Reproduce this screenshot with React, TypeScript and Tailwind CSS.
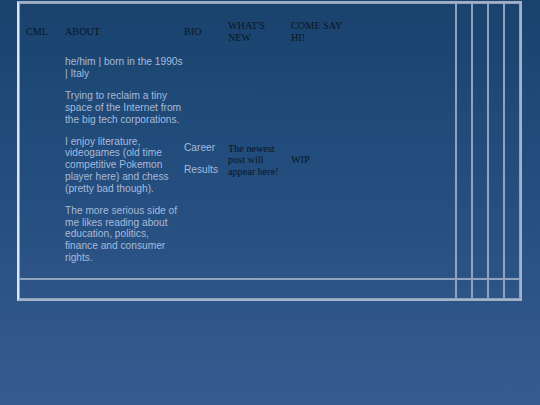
export default function App() {
  const serif = "font-['Liberation_Serif','Times_New_Roman',serif] text-[10.2px] leading-[11.5px] text-[#0a1524]"
  const sans = "font-['Liberation_Sans',Arial,sans-serif] text-[10.2px] leading-[11.8px] text-[#a7badb]"
  const cell = 'border border-[#8fa3bf]'

  return (
    <div className="min-h-[405px] w-full bg-linear-to-b from-[#19436d] via-[#254f80] to-[#375b90] pt-px pl-[17px]">
      <div className="grid h-[300px] w-[505px] grid-cols-[1fr_16px_16px_16px_16px] grid-rows-[276px_20px] border-2 border-t-[#9fb0c6] border-l-[#dce4ef] border-r-[#a3b2c6] border-b-[#a3b2c6]">
        <div className={cell}>
          <div className="grid grid-cols-[39px_119px_44px_63px_60px] items-center gap-y-[3px] pl-[6px] pt-[16px]">
            {/* header row */}
            <div className={serif}>CML</div>
            <div className={serif}>ABOUT</div>
            <div className={serif}>BIO</div>
            <div className={`${serif} w-[58px]`}>WHAT'S NEW</div>
            <div className={`${serif} w-[60px]`}>COME SAY HI!</div>

            {/* content row */}
            <div />
            <div className={`${sans} w-[118.5px]`}>
              <p className="my-[10.2px]">he/him | born in the 1990s | Italy</p>
              <p className="my-[10.2px]">Trying to reclaim a tiny space of the Internet from the big tech corporations.</p>
              <p className="my-[10.2px]">
                I enjoy literature, videogames (old time competitive Pokemon player here) and chess (pretty bad though).
              </p>
              <p className="my-[10.2px]">
                The more serious side of me likes reading about education, politics, finance and consumer rights.
              </p>
            </div>
            <div className={`${sans} -mt-[2px]`}>
              <p className="my-[10.2px]">Career</p>
              <p className="my-[10.2px]">Results</p>
            </div>
            <div className={`${serif} w-[58px]`}>The newest post will appear here!</div>
            <div className={serif}>WIP</div>
          </div>
        </div>
        <div className={cell} />
        <div className={cell} />
        <div className={cell} />
        <div className={cell} />

        <div className={cell} />
        <div className={cell} />
        <div className={cell} />
        <div className={cell} />
        <div className={cell} />
      </div>
    </div>
  )
}
